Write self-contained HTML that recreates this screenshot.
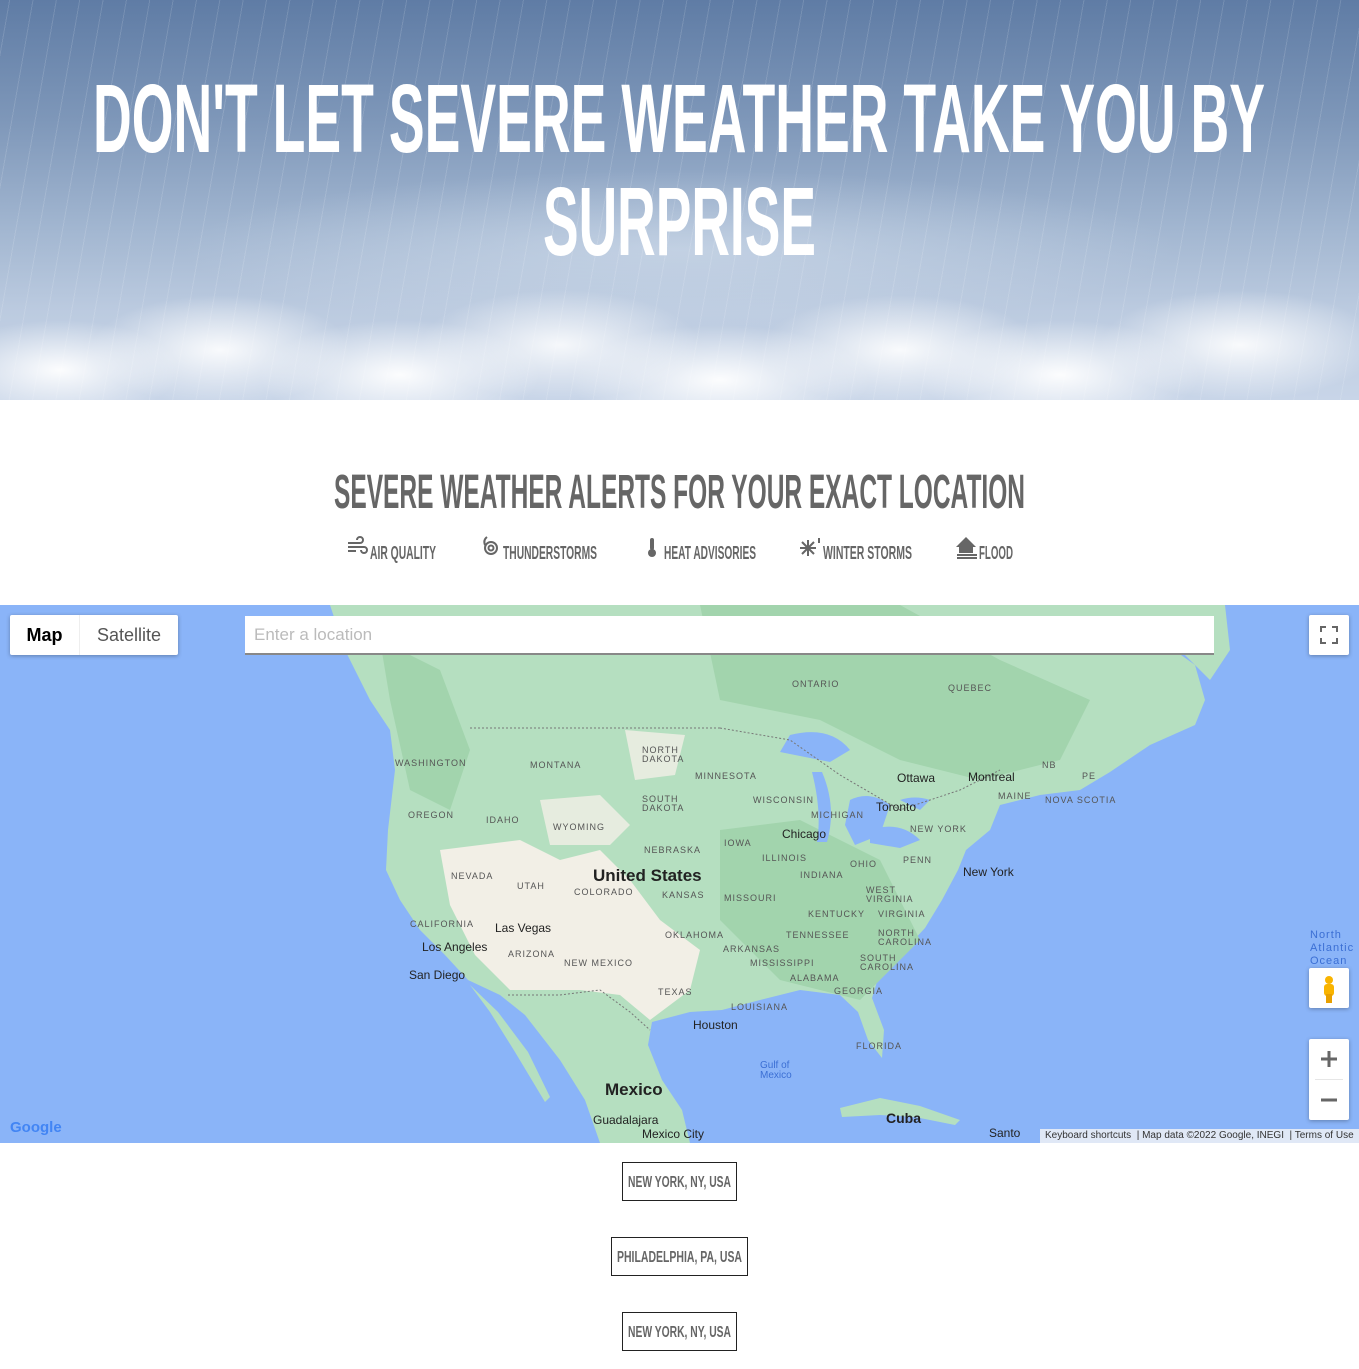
<!DOCTYPE html>
<html><head><meta charset="utf-8"><style>
*{margin:0;padding:0;box-sizing:border-box}
body{width:1359px;height:1369px;background:#fff;position:relative;overflow:hidden;font-family:"Liberation Sans",sans-serif}
.hero{position:absolute;left:0;top:0;width:1359px;height:400px;
background:
repeating-linear-gradient(100deg,rgba(255,255,255,0) 0 9px,rgba(255,255,255,.13) 9px 10px,rgba(255,255,255,0) 10px 23px),
radial-gradient(ellipse 120px 50px at 60px 370px,rgba(255,255,255,.95),rgba(255,255,255,0)),
radial-gradient(ellipse 130px 55px at 220px 350px,rgba(255,255,255,.9),rgba(255,255,255,0)),
radial-gradient(ellipse 140px 55px at 400px 375px,rgba(255,255,255,.95),rgba(255,255,255,0)),
radial-gradient(ellipse 140px 55px at 560px 345px,rgba(255,255,255,.85),rgba(255,255,255,0)),
radial-gradient(ellipse 150px 55px at 720px 380px,rgba(255,255,255,.95),rgba(255,255,255,0)),
radial-gradient(ellipse 140px 55px at 900px 350px,rgba(255,255,255,.9),rgba(255,255,255,0)),
radial-gradient(ellipse 140px 55px at 1060px 375px,rgba(255,255,255,.95),rgba(255,255,255,0)),
radial-gradient(ellipse 140px 55px at 1240px 345px,rgba(255,255,255,.9),rgba(255,255,255,0)),
radial-gradient(ellipse 500px 80px at 680px 250px,rgba(220,230,242,.5),rgba(255,255,255,0)),
linear-gradient(180deg,#5f7ca5 0%,#7e97b9 30%,#a3b7d1 58%,#bccbe0 78%,#c8d5e8 100%)}
svg text{font-family:"Liberation Sans",sans-serif}
.btn{position:absolute;border:1px solid #222;background:#fff}
.ctl{position:absolute;background:#fff;box-shadow:0 1px 4px rgba(0,0,0,.3);border-radius:2px}
</style></head><body>
<div class="hero"></div>
<svg width="1359" height="1369" style="position:absolute;left:0;top:0">
<g fill="#fff" font-weight="bold" font-size="97">
<text x="93" y="152" textLength="1172" lengthAdjust="spacingAndGlyphs">DON'T LET SEVERE WEATHER TAKE YOU BY</text>
<text x="543" y="255" textLength="273" lengthAdjust="spacingAndGlyphs">SURPRISE</text>
</g>
<text x="334" y="508" font-size="48" font-weight="bold" fill="#666" textLength="691" lengthAdjust="spacingAndGlyphs">SEVERE WEATHER ALERTS FOR YOUR EXACT LOCATION</text>
<g fill="#666" font-size="18" font-weight="bold">
<text x="370" y="559" textLength="66" lengthAdjust="spacingAndGlyphs">AIR QUALITY</text>
<text x="503" y="559" textLength="94" lengthAdjust="spacingAndGlyphs">THUNDERSTORMS</text>
<text x="664" y="559" textLength="92" lengthAdjust="spacingAndGlyphs">HEAT ADVISORIES</text>
<text x="823" y="559" textLength="89" lengthAdjust="spacingAndGlyphs">WINTER STORMS</text>
<text x="979" y="559" textLength="34" lengthAdjust="spacingAndGlyphs">FLOOD</text>
</g>
<g stroke="#666" fill="none" stroke-width="2">
<path d="M348 543h12a3 3 0 1 0-3-3M348 547h16a3 3 0 1 1-3 3M348 551h8"/>
<circle cx="491" cy="548" r="6"/><circle cx="491" cy="548" r="2.5"/><path d="M485 545q-2-5 2-8"/>
<path d="M808 540v16M800 548h16M802 542l12 12M814 542l-12 12"/><path d="M819 538v5"/>
<path d="M957 555h20M957 558h20"/>
</g>
<path d="M956 547l10-10 10 10h-3v6h-14v-6z" fill="#666"/>
<rect x="650" y="538" width="4" height="12" rx="2" fill="#666"/><circle cx="652" cy="553" r="4" fill="#666"/>
</svg>
<div class="btn" style="left:622px;top:1162px;width:115px;height:39px"></div>
<div class="btn" style="left:611px;top:1237px;width:137px;height:39px"></div>
<div class="btn" style="left:622px;top:1312px;width:115px;height:39px"></div>
<svg width="1359" height="1369" style="position:absolute;left:0;top:0;pointer-events:none">
<g fill="#666" font-size="16" font-weight="bold">
<text x="628" y="1187" textLength="103" lengthAdjust="spacingAndGlyphs">NEW YORK, NY, USA</text>
<text x="617" y="1262" textLength="125" lengthAdjust="spacingAndGlyphs">PHILADELPHIA, PA, USA</text>
<text x="628" y="1337" textLength="103" lengthAdjust="spacingAndGlyphs">NEW YORK, NY, USA</text>
</g></svg>

<div style="position:absolute;left:0;top:605px;width:1359px;height:538px;overflow:hidden;background:#8ab4f8">
<svg width="1359" height="538" viewBox="0 605 1359 538" style="position:absolute;left:0;top:0">
<path fill="#b5dfc0" d="M330 605L345 650 370 700 390 730 395 770 388 830 386 870 400 900 420 930 445 955 468 980 500 995 525 1015 560 1060 585 1100 600 1143 690 1143 682 1110 662 1080 648 1045 652 1022 690 1012 722 1010 760 1000 800 990 840 995 858 1012 868 1040 882 1058 884 1030 872 998 880 972 900 955 925 928 942 900 958 870 966 850 990 830 1000 805 1040 795 1080 790 1110 772 1150 745 1195 725 1205 700 1195 665 1160 640 1105 605Z"/>
<path fill="#b5dfc0" d="M1080 605L1110 640 1170 640 1210 680 1230 650 1225 605Z"/>
<path fill="#a2d4ad" d="M700 605L900 605 1000 660 1090 700 1060 760 980 780 900 760 820 720 720 700Z M380 640l60 30 30 80-20 60-40-20-20-90Z M720 830l80-10 80 40 40 80-60 60-80-20-60-60Z"/>
<path fill="#b5dfc0" d="M470 985L498 1012 528 1052 550 1097 545 1102 515 1052 490 1012Z"/>
<path fill="#b5dfc0" d="M840 1108l40-10 40 8 40 14-5 5-40-8-35-2-38 2Z"/>
<path fill="#f2efe6" d="M440 850L520 840 560 860 600 850 630 880 660 920 700 950 690 990 650 1020 620 995 580 990 510 990 475 955 450 905Z"/>
<path fill="#f2efe6" opacity=".8" d="M540 800l60-5 30 30-20 20-60 0Z M625 730l60 5-10 40-40 5Z"/>
<path fill="#8ab4f8" d="M790 735q40-10 60 15l-20 12-50-10Z M812 772q10 40 5 70l10 0q10-35-5-70Z M850 800q20-10 40 5l-10 30-25 10-10-20Z M870 830q30-10 50 10l-20 8-30-5Z M900 800q15-5 30 0l-10 10z"/>
<g stroke="#777" stroke-width="1" fill="none" stroke-dasharray="2 2">
<path d="M470 728H720M720 728L790 740 840 775 900 810 960 790 1000 770"/>
<path d="M508 995L560 995 600 990 630 1012 650 1030"/>
</g>
</svg>
<div style="position:absolute;left:0;top:0;width:1359px;height:538px;font-size:9px;color:#555;letter-spacing:1px;font-family:'Liberation Sans',sans-serif">
<span style="position:absolute;left:792px;top:74px">ONTARIO</span>
<span style="position:absolute;left:948px;top:78px">QUEBEC</span>
<span style="position:absolute;left:395px;top:153px">WASHINGTON</span>
<span style="position:absolute;left:530px;top:155px">MONTANA</span>
<span style="position:absolute;left:642px;top:141px;line-height:9px">NORTH<br>DAKOTA</span>
<span style="position:absolute;left:695px;top:166px">MINNESOTA</span>
<span style="position:absolute;left:642px;top:190px;line-height:9px">SOUTH<br>DAKOTA</span>
<span style="position:absolute;left:408px;top:205px">OREGON</span>
<span style="position:absolute;left:486px;top:210px">IDAHO</span>
<span style="position:absolute;left:553px;top:217px">WYOMING</span>
<span style="position:absolute;left:753px;top:190px">WISCONSIN</span>
<span style="position:absolute;left:811px;top:205px">MICHIGAN</span>
<span style="position:absolute;left:644px;top:240px">NEBRASKA</span>
<span style="position:absolute;left:724px;top:233px">IOWA</span>
<span style="position:absolute;left:762px;top:248px">ILLINOIS</span>
<span style="position:absolute;left:451px;top:266px">NEVADA</span>
<span style="position:absolute;left:517px;top:276px">UTAH</span>
<span style="position:absolute;left:574px;top:282px">COLORADO</span>
<span style="position:absolute;left:662px;top:285px">KANSAS</span>
<span style="position:absolute;left:724px;top:288px">MISSOURI</span>
<span style="position:absolute;left:800px;top:265px">INDIANA</span>
<span style="position:absolute;left:850px;top:254px">OHIO</span>
<span style="position:absolute;left:903px;top:250px">PENN</span>
<span style="position:absolute;left:910px;top:219px">NEW YORK</span>
<span style="position:absolute;left:998px;top:186px">MAINE</span>
<span style="position:absolute;left:1045px;top:190px">NOVA SCOTIA</span>
<span style="position:absolute;left:1042px;top:155px">NB</span>
<span style="position:absolute;left:1082px;top:166px">PE</span>
<span style="position:absolute;left:410px;top:314px">CALIFORNIA</span>
<span style="position:absolute;left:508px;top:344px">ARIZONA</span>
<span style="position:absolute;left:564px;top:353px">NEW MEXICO</span>
<span style="position:absolute;left:665px;top:325px">OKLAHOMA</span>
<span style="position:absolute;left:808px;top:304px">KENTUCKY</span>
<span style="position:absolute;left:786px;top:325px">TENNESSEE</span>
<span style="position:absolute;left:723px;top:339px">ARKANSAS</span>
<span style="position:absolute;left:750px;top:353px">MISSISSIPPI</span>
<span style="position:absolute;left:790px;top:368px">ALABAMA</span>
<span style="position:absolute;left:834px;top:381px">GEORGIA</span>
<span style="position:absolute;left:658px;top:382px">TEXAS</span>
<span style="position:absolute;left:731px;top:397px">LOUISIANA</span>
<span style="position:absolute;left:856px;top:436px">FLORIDA</span>
<span style="position:absolute;left:878px;top:324px;line-height:9px">NORTH<br>CAROLINA</span>
<span style="position:absolute;left:860px;top:349px;line-height:9px">SOUTH<br>CAROLINA</span>
<span style="position:absolute;left:866px;top:281px;line-height:9px">WEST<br>VIRGINIA</span>
<span style="position:absolute;left:878px;top:304px">VIRGINIA</span>
<span style="position:absolute;left:1310px;top:324px;font-size:11px;color:#3b6fd4;line-height:13px">North<br>Atlantic<br>Ocean</span>
<span style="position:absolute;left:760px;top:456px;font-size:10px;color:#3b6fd4;letter-spacing:0;line-height:10px">Gulf of<br>Mexico</span>
</div>
<div style="position:absolute;left:0;top:0;width:1359px;height:538px;font-size:12px;color:#222;font-family:'Liberation Sans',sans-serif">
<span style="position:absolute;left:593px;top:261px;font-size:17px;font-weight:bold">United States</span>
<span style="position:absolute;left:605px;top:475px;font-size:17px;font-weight:bold">Mexico</span>
<span style="position:absolute;left:897px;top:166px">Ottawa</span>
<span style="position:absolute;left:968px;top:165px">Montreal</span>
<span style="position:absolute;left:876px;top:195px">Toronto</span>
<span style="position:absolute;left:782px;top:222px">Chicago</span>
<span style="position:absolute;left:963px;top:260px">New York</span>
<span style="position:absolute;left:495px;top:316px">Las Vegas</span>
<span style="position:absolute;left:422px;top:335px">Los Angeles</span>
<span style="position:absolute;left:409px;top:363px">San Diego</span>
<span style="position:absolute;left:693px;top:413px">Houston</span>
<span style="position:absolute;left:593px;top:508px">Guadalajara</span>
<span style="position:absolute;left:642px;top:522px">Mexico City</span>
<span style="position:absolute;left:886px;top:505px;font-size:14px;font-weight:bold">Cuba</span>
<span style="position:absolute;left:989px;top:521px">Santo</span>
<span style="position:absolute;left:10px;top:514px;font-size:15px;font-weight:bold;color:#4285f4">Google</span>
</div>
<div class="ctl" style="left:10px;top:10px;width:168px;height:40px;display:flex;font-size:18px;align-items:center">
<span style="width:70px;text-align:center;color:#000;font-weight:bold;border-right:1px solid #eee;line-height:40px">Map</span><span style="flex:1;text-align:center;color:#555">Satellite</span></div>
<div style="position:absolute;left:245px;top:11px;width:969px;height:39px;background:#fff;border-bottom:2px solid #888;font-size:17px;color:#bbb;padding:9px 9px">Enter a location</div>
<div class="ctl" style="left:1309px;top:10px;width:40px;height:40px"><svg width="40" height="40"><path d="M12 17v-5h5M23 12h5v5M28 23v5h-5M17 28h-5v-5" stroke="#666" stroke-width="2" fill="none"/></svg></div>
<div class="ctl" style="left:1309px;top:363px;width:40px;height:40px"><svg width="40" height="40"><circle cx="20" cy="12" r="4" fill="#f9b400"/><rect x="15" y="16" width="10" height="12" rx="3" fill="#f9b400"/><rect x="17" y="26" width="6" height="9" fill="#e8a000"/></svg></div>
<div class="ctl" style="left:1309px;top:434px;width:40px;height:81px"><svg width="40" height="81"><path d="M20 12v16M12 20h16M12 61h16" stroke="#666" stroke-width="3"/><path d="M6 40.5h28" stroke="#e6e6e6"/></svg></div>
<div style="position:absolute;left:1040px;top:524px;width:319px;height:14px;background:rgba(245,245,245,.8);font-size:10px;color:#333;white-space:nowrap;padding-left:5px;line-height:14px">Keyboard shortcuts &nbsp;| Map data ©2022 Google, INEGI &nbsp;| Terms of Use</div>
</div>
</body></html>
